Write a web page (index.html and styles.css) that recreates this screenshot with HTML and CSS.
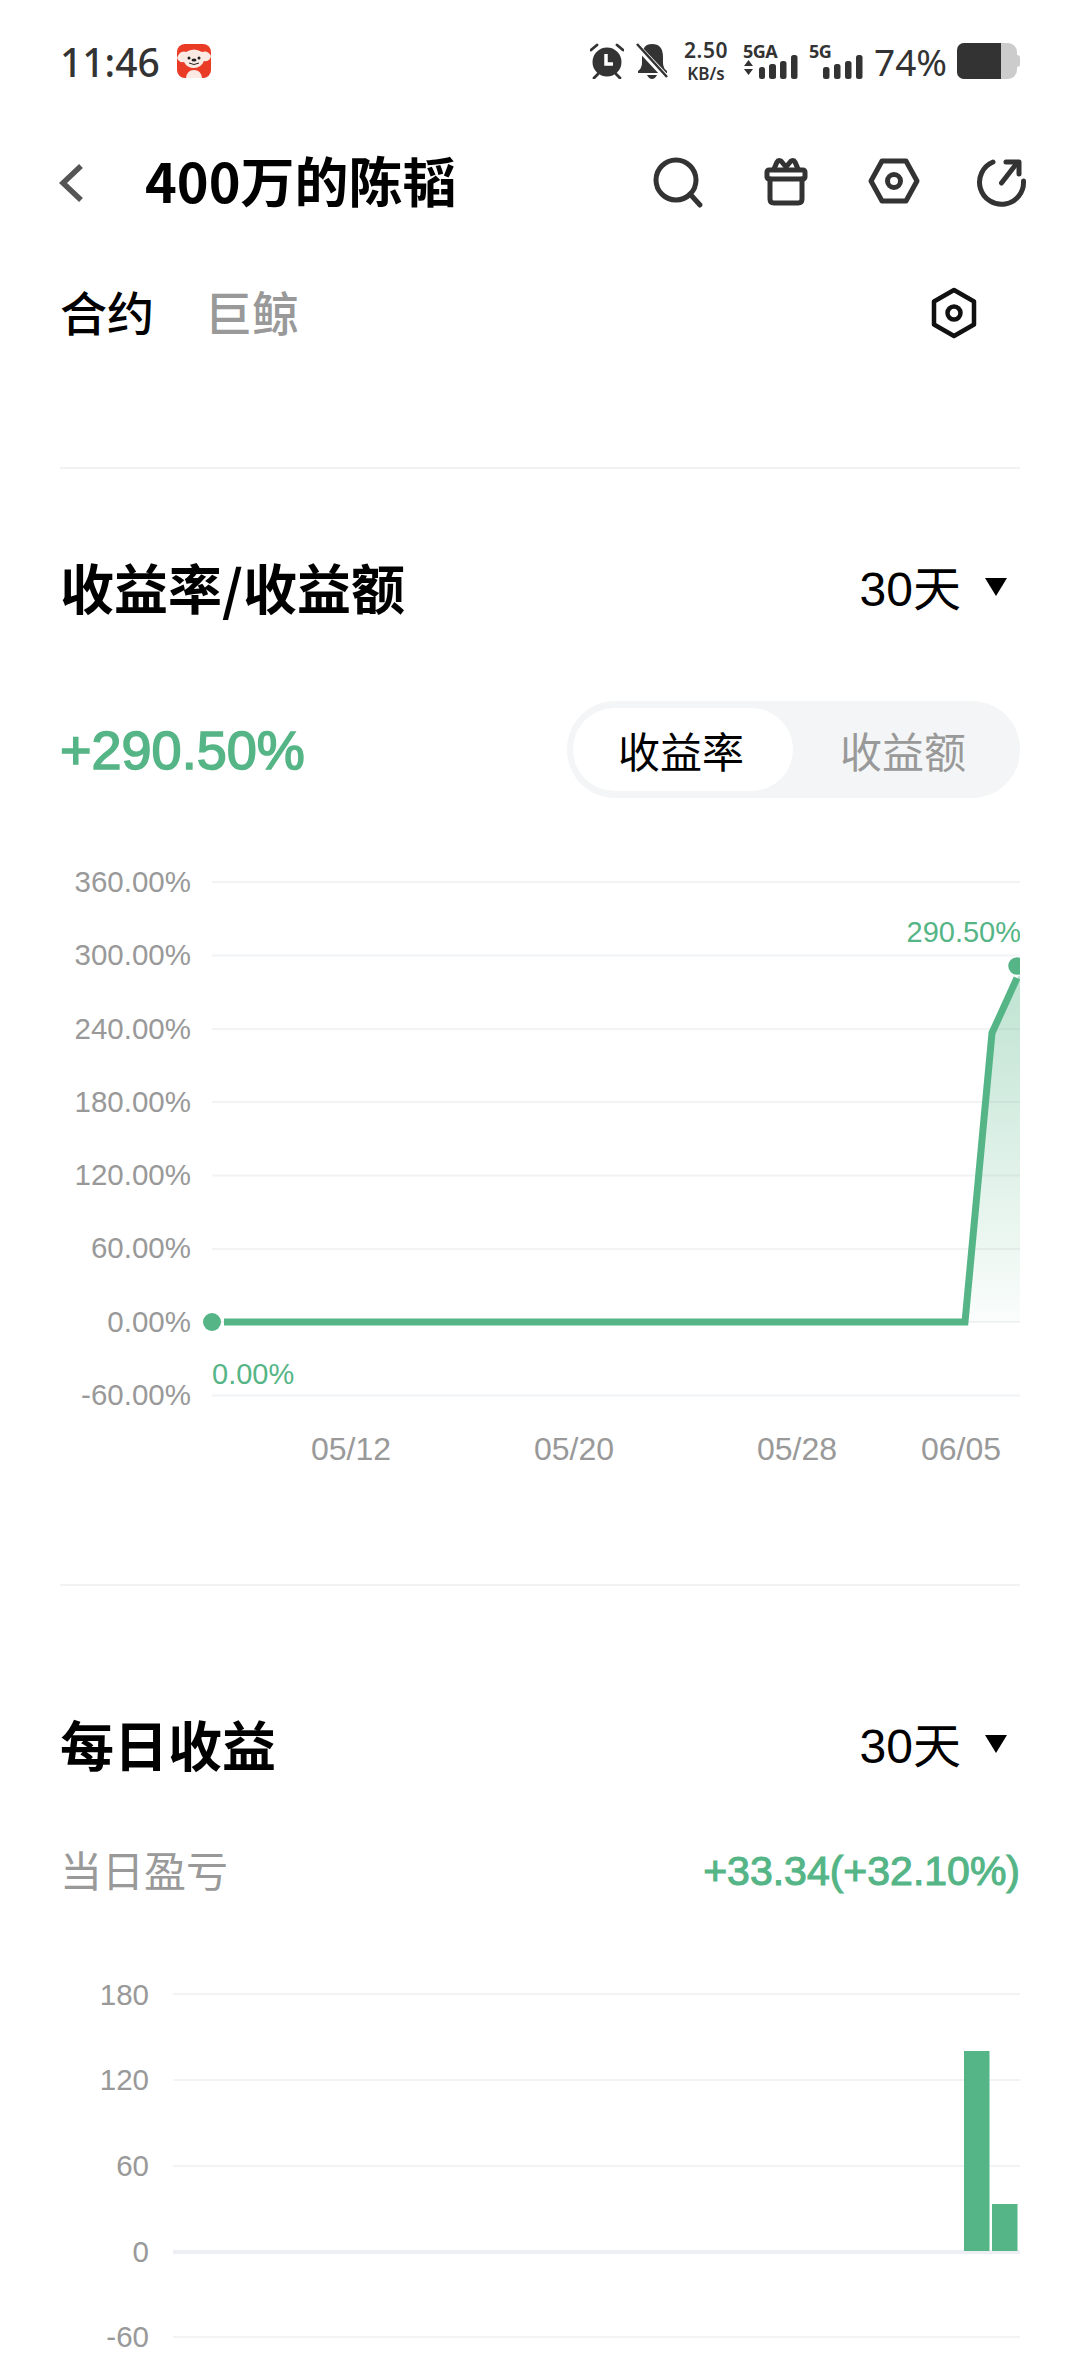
FILE: index.html
```html
<!DOCTYPE html>
<html lang="zh-CN">
<head>
    <meta charset="UTF-8">
    <meta name="viewport" content="width=device-width, initial-scale=1.0">
    <title>400万的陈韬</title>
    <link rel="stylesheet" href="styles.css">
</head>
<body>
    <section id="mainwrapper">
        <!-- status bar -->
        <header class="statusbar">
            <div class="status-left">
                <span class="time">11:46</span>
                <svg class="app-icon" width="34" height="34" viewBox="0 0 34 34">
                    <rect width="34" height="34" rx="8" fill="#ea3b26"/>
                    <path d="M0 14 Q3 6 9 8 Q17 3 25 8 Q31 6 34 12 Q33 18 27 17 Q24 24 17 24 Q10 24 7 18 Q2 19 0 14Z" fill="#fbe9e4"/>
                    <path d="M9 34 Q10 26 17 26 Q24 26 25 34Z" fill="#fbe9e4"/>
                    <circle cx="12" cy="14" r="1.5" fill="#222"/>
                    <circle cx="22" cy="14" r="1.5" fill="#222"/>
                    <ellipse cx="17" cy="16" rx="2.5" ry="1.5" fill="#222"/>
                    <path d="M12 19 Q17 22 22 19" fill="none" stroke="#222" stroke-width="1"/>
                </svg>
            </div>
            <div class="status-right">
                <svg class="st-alarm" width="34" height="36" viewBox="0 0 34 36">
                    <circle cx="17" cy="19" r="14.5" fill="#333"/>
                    <path d="M16 11V21H23" fill="none" stroke="#fff" stroke-width="3.5"/>
                    <path d="M1 7L7 2M33 7L27 2M4 35L8 31M30 35L26 31" stroke="#333" stroke-width="2.8" stroke-linecap="round"/>
                </svg>
                <svg class="st-bell" width="32" height="36" viewBox="0 0 32 36">
                    <path d="M2 28Q6 25 6 20V14Q6 1 16 1Q27 1 27 14V20Q27 25 31 28V30H2Z" fill="#333"/>
                    <path d="M11 32H21Q19 36 16 36Q13 36 11 32Z" fill="#333"/>
                    <path d="M1 3L30 34" stroke="#fff" stroke-width="6"/>
                    <path d="M1 1L31 34" stroke="#333" stroke-width="2.5"/>
                </svg>
                <div class="speed">
                    <span class="speed-num">2.50</span>
                    <span class="speed-unit">KB/s</span>
                </div>
                <div class="sig sig-a">
                    <span class="sig-label">5GA</span>
                    <svg width="55" height="24" viewBox="0 0 55 24">
                        <path d="M1 11L5.5 5L10 11ZM1 14H10L5.5 20Z" fill="#333"/>
                        <rect x="16" y="12" width="6" height="12" rx="2.5" fill="#333"/>
                        <rect x="26" y="9" width="7" height="15" rx="2.5" fill="#333"/>
                        <rect x="37" y="6" width="6.5" height="18" rx="2.5" fill="#333"/>
                        <rect x="48" y="0" width="6.5" height="24" rx="2.5" fill="#333"/>
                    </svg>
                </div>
                <div class="sig">
                    <span class="sig-label">5G</span>
                    <svg width="54" height="24" viewBox="0 0 54 24">
                        <rect x="14" y="12" width="6.5" height="12" rx="2.5" fill="#333"/>
                        <rect x="25" y="9" width="6.5" height="15" rx="2.5" fill="#333"/>
                        <rect x="36" y="6" width="6.5" height="18" rx="2.5" fill="#333"/>
                        <rect x="47" y="0" width="6.5" height="24" rx="2.5" fill="#333"/>
                    </svg>
                </div>
                <span class="battery-num">74%</span>
                <div class="battery"><div class="battery-fill"></div></div>
                <div class="battery-tip"></div>
            </div>
        </header>

        <!-- toolbar -->
        <nav class="toolbar">
            <svg class="back" width="30" height="44" viewBox="0 0 30 44">
                <path d="M24 5L6 22L24 39" fill="none" stroke="#555" stroke-width="5.5"/>
            </svg>
            <h1 class="title">400万的陈韬</h1>
            <div class="tools">
                <svg width="54" height="54" viewBox="0 0 54 54" fill="none" stroke="#333" stroke-width="5" stroke-linecap="round" stroke-linejoin="round">
                    <circle cx="25" cy="24" r="20"/>
                    <path d="M39 38L49 49"/>
                </svg>
                <svg width="54" height="54" viewBox="0 0 54 54" fill="none" stroke="#333" stroke-width="5" stroke-linecap="round" stroke-linejoin="round">
                    <rect x="8" y="14" width="38" height="9" rx="2"/>
                    <path d="M11 23V43Q11 47 15 47H39Q43 47 43 43V23"/>
                    <path d="M15 13L18 6Q19 4 22 5L27 11L32 5Q35 4 36 6L39 13"/>
                </svg>
                <svg width="54" height="54" viewBox="0 0 54 54" fill="none" stroke="#333" stroke-width="5" stroke-linejoin="round">
                    <path d="M4 25L15 5H39L50 25L39 45H15Z"/>
                    <circle cx="27" cy="25" r="6.5"/>
                </svg>
                <svg width="54" height="54" viewBox="0 0 54 54" fill="none" stroke="#333" stroke-width="5" stroke-linecap="round" stroke-linejoin="round">
                    <path d="M18 6A22 22 0 1 0 48.5 25"/>
                    <path d="M26.5 27L42 7"/>
                    <path d="M31 6H44V18"/>
                </svg>
            </div>
        </nav>

        <!-- tabs -->
        <div class="tabs">
            <div class="tab-list">
                <span class="tab tab-active">合约</span>
                <span class="tab">巨鲸</span>
            </div>
            <svg width="48" height="52" viewBox="0 0 48 52" fill="none" stroke="#111" stroke-width="4.5" stroke-linejoin="round">
                <path d="M24 3L44 14.5V37.5L24 49L4 37.5V14.5Z"/>
                <circle cx="24" cy="26" r="6.5"/>
            </svg>
        </div>
        <div class="divider divider-top"></div>

        <!-- yield chart -->
        <section class="panel panel-yield">
            <div class="panel-head">
                <h2 class="panel-title">收益率/收益额</h2>
                <div class="range">
                    <span class="range-text">30天</span>
                    <span class="range-arrow"></span>
                </div>
            </div>
            <div class="value-row">
                <span class="big-value">+290.50%</span>
                <div class="toggle">
                    <span class="toggle-item toggle-on">收益率</span>
                    <span class="toggle-item">收益额</span>
                </div>
            </div>
            <svg class="chart chart-yield" width="960" height="620" viewBox="60 860 960 620">
                <defs>
                    <linearGradient id="areafill" x1="0" y1="0" x2="0" y2="1">
                        <stop offset="0" stop-color="#55b586" stop-opacity="0.38"/>
                        <stop offset="1" stop-color="#55b586" stop-opacity="0.03"/>
                    </linearGradient>
                    <clipPath id="plotclip"><rect x="195" y="860" width="825" height="600"/></clipPath>
                </defs>
                <g class="grid">
                    <path d="M212 882H1020M212 955.5H1020M212 1029H1020M212 1102H1020M212 1175.5H1020M212 1249H1020M212 1322H1020M212 1395.5H1020"/>
                </g>
                <g class="ylabels">
                    <text x="191" y="892">360.00%</text>
                    <text x="191" y="965">300.00%</text>
                    <text x="191" y="1039">240.00%</text>
                    <text x="191" y="1112">180.00%</text>
                    <text x="191" y="1185">120.00%</text>
                    <text x="191" y="1258">60.00%</text>
                    <text x="191" y="1332">0.00%</text>
                    <text x="191" y="1405">-60.00%</text>
                </g>
                <g clip-path="url(#plotclip)">
                    <path d="M965 1322L992 1033L1020 972V1322Z" fill="url(#areafill)"/>
                    <path d="M224 1322H965L992 1033L1017 978" fill="none" stroke="#55b586" stroke-width="7"/>
                    <circle cx="212" cy="1322" r="9" fill="#55b586"/>
                    <circle cx="1017" cy="966" r="9.5" fill="#55b586" stroke="#fff" stroke-width="1.5"/>
                </g>
                <text class="point-label" x="1021" y="942" text-anchor="end">290.50%</text>
                <text class="point-label" x="212" y="1384">0.00%</text>
                <g class="xlabels">
                    <text x="351" y="1460">05/12</text>
                    <text x="574" y="1460">05/20</text>
                    <text x="797" y="1460">05/28</text>
                    <text x="961" y="1460">06/05</text>
                </g>
            </svg>
        </section>
        <div class="divider"></div>

        <!-- daily chart -->
        <section class="panel panel-daily">
            <div class="panel-head">
                <h2 class="panel-title">每日收益</h2>
                <div class="range">
                    <span class="range-text">30天</span>
                    <span class="range-arrow"></span>
                </div>
            </div>
            <div class="pnl-row">
                <span class="pnl-label">当日盈亏</span>
                <span class="pnl-value">+33.34(+32.10%)</span>
            </div>
            <svg class="chart chart-daily" width="960" height="416" viewBox="60 1960 960 416">
                <g class="grid">
                    <path d="M173 1994H1020M173 2080H1020M173 2166H1020M173 2337H1020"/>
                </g>
                <path class="baseline" d="M173 2252H1020"/>
                <g class="ylabels">
                    <text x="149" y="2005">180</text>
                    <text x="149" y="2090">120</text>
                    <text x="149" y="2176">60</text>
                    <text x="149" y="2262">0</text>
                    <text x="149" y="2347">-60</text>
                </g>
                <rect class="bar" x="964" y="2051" width="25.5" height="200"/>
                <rect class="bar" x="992" y="2204" width="25.5" height="47"/>
            </svg>
        </section>
    </section>
</body>
</html>
```

FILE: styles.css
```css
*{
    padding:0;
    margin:0;
    box-sizing: border-box;
}
html,body{
    background-color:#fff;
}
body{
    width:1080px;
    height:2376px;
    overflow:hidden;
    font-family:"Noto Sans CJK SC","Noto Sans",sans-serif;
}
svg{
    display:block;
    flex-shrink:0;
}

/* status bar */
.statusbar{
    height:122px;
    padding:0 60px;
    display:flex;
    justify-content:space-between;
    align-items:center;
}
.status-left{
    display:flex;
    align-items:center;
    gap:17px;
}
.time{
    font-family:"Noto Sans",sans-serif;
    font-size:39px;
    font-weight:500;
    color:#333;
    line-height:1;
}
.status-right{
    display:flex;
    align-items:center;
    color:#333;
}
.st-alarm{
    margin-right:12px;
}
.st-bell{
    margin-right:15px;
}
.speed{
    width:46px;
    margin-right:14px;
    display:flex;
    flex-direction:column;
    align-items:center;
    gap:4px;
    font-family:"Noto Sans",sans-serif;
    font-weight:600;
    line-height:1;
}
.speed-num{
    font-size:21px;
    letter-spacing:0.5px;
}
.speed-unit{
    font-size:17px;
}
.sig{
    width:54px;
    margin-right:11px;
    height:36px;
    position:relative;
    display:flex;
    align-items:flex-end;
}
.sig-a{
    width:55px;
}
.sig-label{
    position:absolute;
    left:0;
    top:-1px;
    font-family:"Noto Sans",sans-serif;
    font-size:18px;
    font-weight:700;
    line-height:1;
    letter-spacing:-0.5px;
}
.battery-num{
    font-family:"Noto Sans",sans-serif;
    font-size:37px;
    line-height:1;
    width:72px;
    margin-right:11px;
    white-space:nowrap;
}
.battery{
    width:60px;
    height:36px;
    background-color:#ccc;
    border-radius:7px 9px 9px 7px;
    overflow:hidden;
}
.battery-fill{
    width:44px;
    height:100%;
    background-color:#333;
}
.battery-tip{
    width:3px;
    height:12px;
    background-color:#ccc;
    border-radius:0 3px 3px 0;
}

/* toolbar */
.toolbar{
    height:122px;
    padding:0 51px 0 57px;
    display:flex;
    align-items:center;
}
.back{
    margin-right:58px;
}
.title{
    font-size:54px;
    font-weight:700;
    color:#000;
    line-height:1;
    flex-grow:1;
    padding-bottom:6px;
}
.tools{
    display:flex;
    gap:54px;
}

/* tabs */
.tabs{
    height:80px;
    margin-top:29px;
    padding:0 102px 0 60px;
    display:flex;
    justify-content:space-between;
    align-items:center;
}
.tab-list{
    display:flex;
    gap:51px;
}
.tab{
    font-size:47px;
    font-weight:500;
    line-height:1;
    color:#999;
    padding-bottom:6px;
}
.tab-active{
    color:#000;
}

.divider{
    height:2px;
    margin:0 60px;
    background-color:#f1f2f4;
}
.divider-top{
    margin-top:114px;
}

/* panels */
.panel{
    padding:0 60px;
}
.panel-yield{
    padding-top:70px;
    padding-bottom:104px;
}
.panel-daily{
    padding-top:110px;
}
.panel-head{
    height:98px;
    display:flex;
    justify-content:space-between;
    align-items:center;
}
.panel-title{
    font-size:54px;
    font-weight:700;
    color:#000;
    line-height:1;
    padding-bottom:3px;
}
.range{
    display:flex;
    align-items:center;
    gap:24px;
    padding-right:13px;
    padding-top:3px;
}
.range-text{
    font-family:"Liberation Sans","Noto Sans CJK SC",sans-serif;
    font-size:48px;
    color:#000;
    line-height:1;
}
.range-arrow{
    width:0;
    height:0;
    border-left:11px solid transparent;
    border-right:11px solid transparent;
    border-top:18px solid #000;
    margin-top:-6px;
}
.value-row{
    margin-top:64px;
    display:flex;
    justify-content:space-between;
    align-items:center;
}
.big-value{
    font-family:"Liberation Sans",sans-serif;
    font-size:54px;
    -webkit-text-stroke:1.6px #55b586;
    color:#55b586;
    line-height:1;
}
.toggle{
    width:453px;
    height:97px;
    padding:7px 0 7px 6px;
    background-color:#f3f5f6;
    border-radius:48px;
    display:flex;
    align-items:center;
}
.toggle-item{
    width:220px;
    height:83px;
    display:flex;
    justify-content:center;
    align-items:center;
    font-size:42px;
    color:#999;
    border-radius:42px;
}
.toggle-on{
    width:220px;
    color:#000;
    background-color:#fff;
    padding-right:4px;
}

/* charts */
.chart{
    font-family:"Liberation Sans",sans-serif;
    font-size:29.5px;
}
.chart-yield{
    margin-top:62px;
}
.chart-daily{
    margin-top:59px;
}
.grid{
    stroke:#f2f3f5;
    stroke-width:2;
    fill:none;
}
.baseline{
    stroke:#eeeff5;
    stroke-width:4;
    fill:none;
}
.ylabels text{
    fill:#999;
    text-anchor:end;
}
.xlabels text{
    fill:#999;
    font-size:32px;
    text-anchor:middle;
}
.point-label{
    fill:#55b586;
    font-size:29px;
}
.bar{
    fill:#55b586;
}
.pnl-row{
    margin-top:47px;
    height:60px;
    display:flex;
    justify-content:space-between;
    align-items:center;
}
.pnl-label{
    font-size:42px;
    color:#999;
    padding-bottom:5px;
}
.pnl-value{
    font-family:"Liberation Sans",sans-serif;
    font-size:41px;
    -webkit-text-stroke:1.1px #55b586;
    color:#55b586;
}
```
